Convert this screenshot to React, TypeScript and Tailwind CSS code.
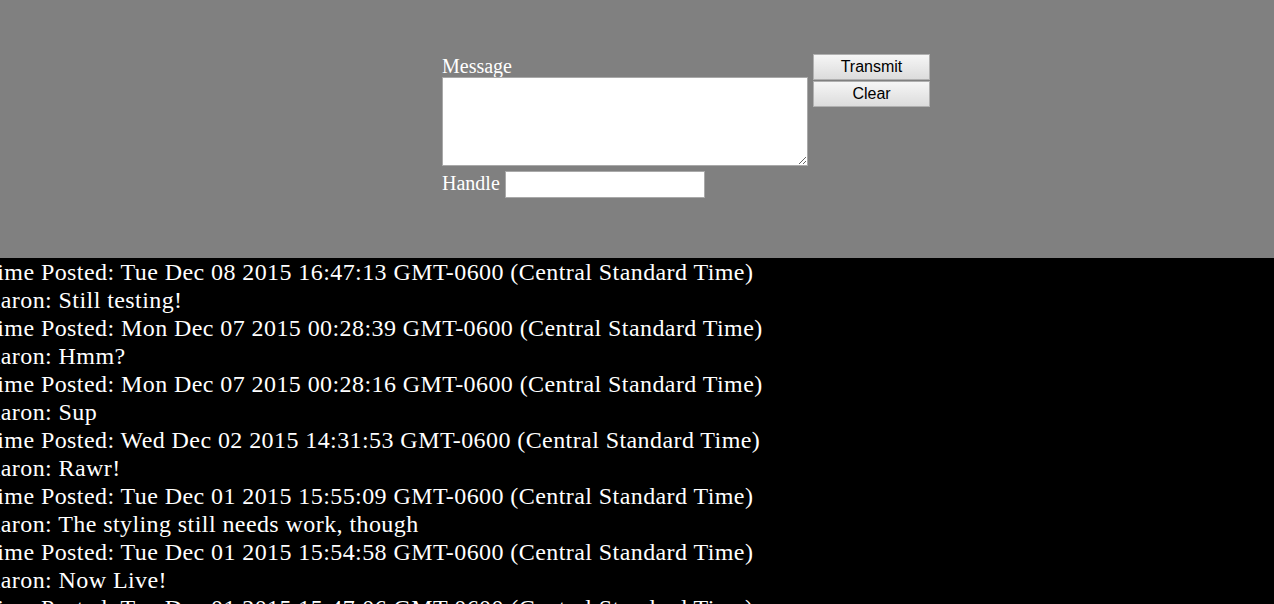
import React from "react";

const msgs: [string, string][] = [
  ["Tue Dec 08 2015 16:47:13", "Still testing!"],
  ["Mon Dec 07 2015 00:28:39", "Hmm?"],
  ["Mon Dec 07 2015 00:28:16", "Sup"],
  ["Wed Dec 02 2015 14:31:53", "Rawr!"],
  ["Tue Dec 01 2015 15:55:09", "The styling still needs work, though"],
  ["Tue Dec 01 2015 15:54:58", "Now Live!"],
  ["Tue Dec 01 2015 15:47:06", "Testing"],
];

export default function App() {
  return (
    <div className="h-[604px] bg-black overflow-hidden" style={{ fontFamily: '"Liberation Serif", "Times New Roman", serif' }}>
      <div className="bg-[#808080] h-[258px] pt-[54px] pl-[442px]">
        <div className="flex items-start gap-[5px]">
          <div className="flex flex-col">
            <label className="text-white text-[20px] leading-[24px] h-[24px] block">Message</label>
            <textarea className="w-[366px] h-[89px] -mt-px bg-white border border-[#a9a9a9] block resize-y" />
            <div className="flex items-center mt-[5px]">
              <span className="text-white text-[20px] leading-[24px] -mt-[4px]">Handle</span>
              <input className="ml-[5px] w-[200px] h-[27px] bg-white border border-[#a9a9a9]" />
            </div>
          </div>
          <div className="flex flex-col gap-[1px]">
            <button className="w-[117px] h-[26px] border border-[#b0b0b0] bg-gradient-to-b from-[#f6f6f6] to-[#dcdcdc] text-black text-[16px] leading-[20px]" style={{ fontFamily: '"Liberation Sans", Arial, sans-serif' }}>Transmit</button>
            <button className="w-[117px] h-[26px] border border-[#b0b0b0] bg-gradient-to-b from-[#f6f6f6] to-[#dcdcdc] text-black text-[16px] leading-[20px]" style={{ fontFamily: '"Liberation Sans", Arial, sans-serif' }}>Clear</button>
          </div>
        </div>
      </div>
      <div className="text-white text-[24px] leading-[28px] tracking-[0.42px] -ml-[17px] whitespace-nowrap">
        {msgs.map(([t, m], i) => (
          <React.Fragment key={i}>
            <div>Time Posted: {t} GMT-0600 (Central Standard Time)</div>
            <div>Aaron: {m}</div>
          </React.Fragment>
        ))}
      </div>
    </div>
  );
}
